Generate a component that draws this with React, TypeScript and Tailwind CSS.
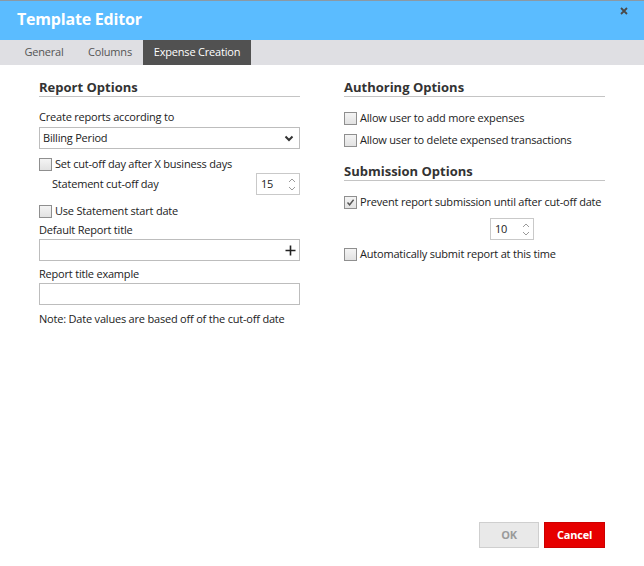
import React from "react";

const font = { fontFamily: '"Open Sans", "Noto Sans", sans-serif' };

const txt = "text-[11px] tracking-[-0.2px] text-[#222] whitespace-nowrap";

function Checkbox({ checked = false }: { checked?: boolean }) {
  return (
    <span className="w-[13px] h-[13px] border border-[#8f8f8f] bg-gradient-to-b from-[#f4f4f4] to-[#e2e2e2] flex items-center justify-center shrink-0">
      {checked && (
        <svg width="9" height="9" viewBox="0 0 9 9">
          <path d="M1.5 4.5 L3.6 6.8 L7.6 1.8" fill="none" stroke="#555" strokeWidth="1.4" />
        </svg>
      )}
    </span>
  );
}

function CheckRow({ label, checked = false, className = "" }: { label: string; checked?: boolean; className?: string }) {
  return (
    <div className={`flex items-center h-[16px] gap-[3px] ${className}`}>
      <Checkbox checked={checked} />
      <span className={`${txt} leading-[16px]`}>{label}</span>
    </div>
  );
}

function Spinner({ value }: { value: string }) {
  return (
    <div className="w-[44px] h-[22px] border border-[#c9c9c9] bg-white flex items-center">
      <span className={`flex-1 pl-[4px] ${txt}`}>{value}</span>
      <div className="w-[12px] h-full flex flex-col items-center justify-center gap-[3px] mr-[1px]">
        <svg width="8" height="5" viewBox="0 0 8 5">
          <path d="M1 4 L4 1 L7 4" fill="none" stroke="#9a9a9a" strokeWidth="1" />
        </svg>
        <svg width="8" height="5" viewBox="0 0 8 5">
          <path d="M1 1 L4 4 L7 1" fill="none" stroke="#9a9a9a" strokeWidth="1" />
        </svg>
      </div>
    </div>
  );
}

function Heading({ children, className = "" }: { children: React.ReactNode; className?: string }) {
  return (
    <div className={`text-[13px] font-bold text-[#333] leading-[17px] border-b border-[#c4c4c4] whitespace-nowrap ${className}`}>
      {children}
    </div>
  );
}

export default function App() {
  return (
    <div className="w-[644px] h-[566px] bg-white flex flex-col border-t border-[#8b99a4]" style={font}>
      <div className="h-[39px] bg-[#5bbcff] relative flex items-center px-[17px] pb-[3px]">
        <span className="text-white font-bold text-[16px] tracking-[-0.2px]">Template Editor</span>
        <svg width="8" height="8" viewBox="0 0 8 8" className="absolute right-[16px] top-[6px]">
          <path d="M1 1 L7 7 M7 1 L1 7" stroke="#4a4a4a" strokeWidth="1.8" />
        </svg>
      </div>
      <div className="h-[25px] bg-[#dfdfe3] flex items-stretch pl-[11px]">
        <div className={`w-[66px] flex items-center justify-center ${txt} !text-[#555]`}>General</div>
        <div className={`w-[66px] flex items-center justify-center ${txt} !text-[#555]`}>Columns</div>
        <div className={`w-[108px] flex items-center justify-center bg-[#515151] ${txt} !text-white`}>Expense Creation</div>
      </div>

      <div className="flex flex-1 pl-[39px] gap-[44px]">
        <div className="w-[261px] flex flex-col pt-[14px]">
          <Heading>Report Options</Heading>
          <div className={`mt-[12px] ${txt} leading-[16px]`}>Create reports according to</div>
          <div className="mt-[2px] h-[22px] border border-[#bdbdbd] flex items-center justify-between px-[3px]">
            <span className={txt}>Billing Period</span>
            <svg width="10" height="7" viewBox="0 0 10 7" className="mr-[2px]">
              <path d="M1.5 1.5 L5 5 L8.5 1.5" fill="none" stroke="#333" strokeWidth="2" />
            </svg>
          </div>
          <CheckRow className="mt-[7px]" label="Set cut-off day after X business days" />
          <div className="mt-[1px] h-[22px] flex items-center justify-between pl-[13px]">
            <span className={txt}>Statement cut-off day</span>
            <Spinner value="15" />
          </div>
          <CheckRow className="mt-[8px]" label="Use Statement start date" />
          <div className={`mt-[3px] ${txt} leading-[16px]`}>Default Report title</div>
          <div className="mt-[1px] h-[22px] border border-[#bdbdbd] flex items-center justify-end pr-[3px]">
            <svg width="11" height="11" viewBox="0 0 11 11">
              <path d="M5.5 0.5 V10.5 M0.5 5.5 H10.5" stroke="#222" strokeWidth="1.6" />
            </svg>
          </div>
          <div className={`mt-[5px] ${txt} leading-[16px]`}>Report title example</div>
          <div className="mt-[1px] h-[22px] border border-[#bdbdbd]" />
          <div className={`mt-[6px] ${txt} leading-[16px]`}>Note: Date values are based off of the cut-off date</div>
        </div>

        <div className="w-[261px] flex flex-col pt-[14px]">
          <Heading>Authoring Options</Heading>
          <CheckRow className="mt-[13px]" label="Allow user to add more expenses" />
          <CheckRow className="mt-[6px]" label="Allow user to delete expensed transactions" />
          <Heading className="mt-[15px]">Submission Options</Heading>
          <CheckRow className="mt-[13px]" label="Prevent report submission until after cut-off date" checked />
          <div className="mt-[8px] ml-[146px]">
            <Spinner value="10" />
          </div>
          <CheckRow className="mt-[6px]" label="Automatically submit report at this time" />
        </div>
      </div>

      <div className="flex justify-end gap-[5px] pr-[39px] pb-[18px]">
        <button className={`w-[60px] h-[26px] bg-[#e9e9e9] border border-[#cfcfcf] font-bold ${txt} !text-[#9a9a9a]`}>OK</button>
        <button className={`w-[61px] h-[26px] bg-[#e60000] border border-[#cc0000] font-bold ${txt} !text-white`}>Cancel</button>
      </div>
    </div>
  );
}
